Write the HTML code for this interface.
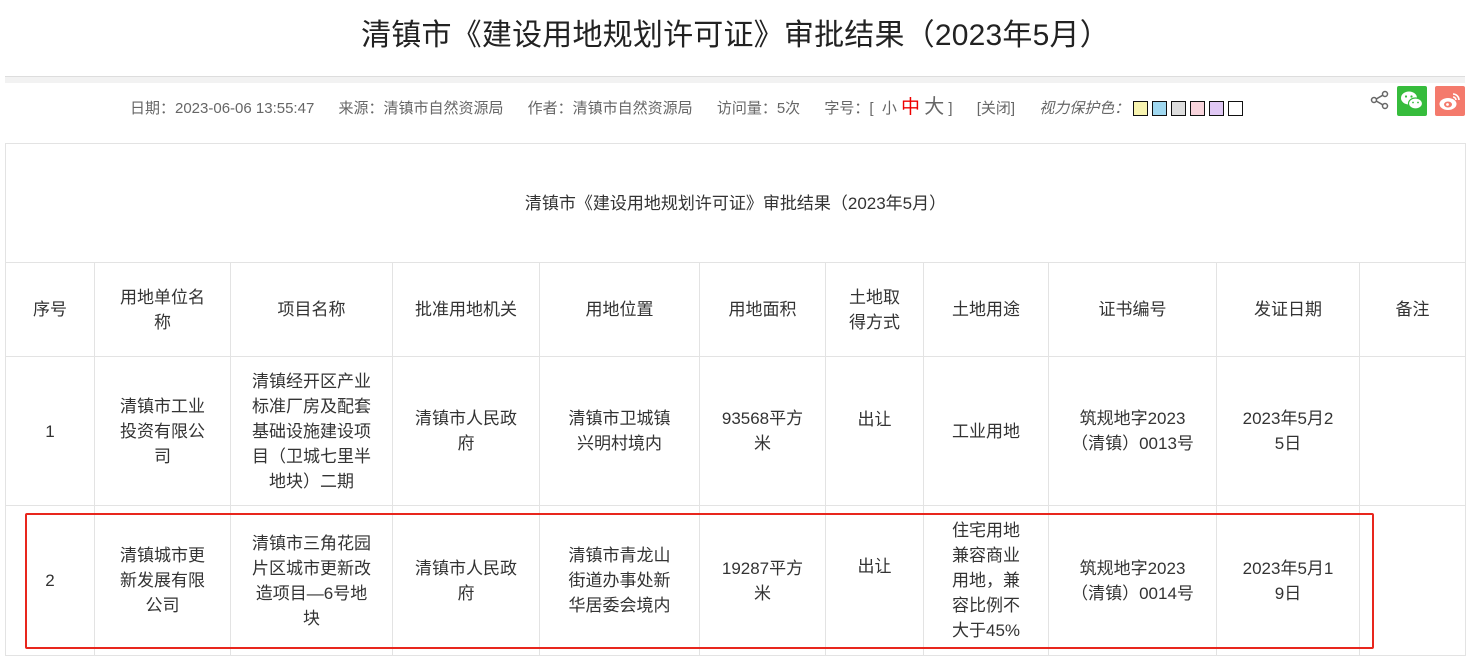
<!DOCTYPE html>
<html><head><meta charset="utf-8"><style>
body{margin:0;width:1479px;height:657px;overflow:hidden;background:#fff;font-family:"Liberation Sans","Noto Sans CJK SC",sans-serif;position:relative}
.t{position:absolute;top:14px;left:-4px;width:1479px;text-align:center;font-size:30px;color:#222;line-height:44px;letter-spacing:0.2px}
.rule{position:absolute;left:5px;top:76px;width:1460px;height:6px;background:#f2f2f2;border-top:1px solid #ddd}
.meta{position:absolute;top:97px;left:130px;font-size:15px;color:#666;white-space:nowrap;line-height:20px}
.meta span{margin-right:20px}
.sw{display:inline-block;width:13px;height:13px;border:1.5px solid #111;vertical-align:-3px;margin-right:4px!important}
table{position:absolute;left:5px;top:143px;border-collapse:collapse;table-layout:fixed;font-size:17px;color:#333}
td{border:1px solid #e3e3e3;text-align:center;vertical-align:middle;padding:0 21px;line-height:25px}
.d{word-break:break-all}
.red{position:absolute;left:25px;top:513px;width:1345px;height:132px;border:2px solid #e8261d;border-radius:2px}
</style></head><body>
<div class="t">清镇市《建设用地规划许可证》审批结果（2023年5月）</div>
<div class="rule"></div>
<div class="meta"><span>日期：2023-06-06 13:55:47</span> <span>来源：清镇市自然资源局</span> <span>作者：清镇市自然资源局</span> <span>访问量：5次</span> <span>字号：[ &nbsp;小 <b style="color:#e00;font-size:19px;font-weight:normal">中</b> <span style="font-size:20px;margin:0">大</span> ]</span> <span>[关闭]</span> <i>视力保护色：</i> <span class="sw" style="background:#f8f4b0"></span><span class="sw" style="background:#a0d8f0"></span><span class="sw" style="background:#ddd"></span><span class="sw" style="background:#f8d4dc"></span><span class="sw" style="background:#e0c8f4"></span><span class="sw" style="background:#fff"></span></div>
<svg style="position:absolute;left:1370px;top:90px" width="20" height="20" viewBox="0 0 20 20"><g fill="none" stroke="#666" stroke-width="1.5"><circle cx="15" cy="4" r="2.5"/><circle cx="4" cy="10" r="2.5"/><circle cx="15" cy="16" r="2.5"/><path d="M6.2 9 L12.8 5.2 M6.2 11 L12.8 14.8"/></g></svg>
<div style="position:absolute;left:1397px;top:86px;width:30px;height:30px;background:#36bc3c;border-radius:2px"><svg width="30" height="30" viewBox="0 0 30 30"><ellipse cx="12" cy="12" rx="8" ry="6.5" fill="#fff"/><ellipse cx="18.5" cy="17.5" rx="7" ry="5.5" fill="#fff" stroke="#36bc3c" stroke-width="1.2"/><circle cx="9" cy="10.5" r="1.1" fill="#36bc3c"/><circle cx="14.5" cy="10.5" r="1.1" fill="#36bc3c"/><circle cx="16" cy="16.5" r="0.9" fill="#36bc3c"/><circle cx="21" cy="16.5" r="0.9" fill="#36bc3c"/></svg></div>
<div style="position:absolute;left:1435px;top:86px;width:30px;height:30px;background:#f47a6c;border-radius:2px"><svg width="30" height="30" viewBox="0 0 30 30"><ellipse cx="13" cy="18" rx="8.5" ry="6" fill="#fff"/><ellipse cx="13" cy="18.5" rx="4" ry="3" fill="#f47a6c"/><circle cx="12.5" cy="18.5" r="1.4" fill="#fff"/><path d="M18 8 a6 6 0 0 1 6 6 M18 11 a3 3 0 0 1 3 3" fill="none" stroke="#fff" stroke-width="1.6"/></svg></div>
<table>
<colgroup><col style="width:89px"><col style="width:136px"><col style="width:162px"><col style="width:147px"><col style="width:160px"><col style="width:126px"><col style="width:98px"><col style="width:125px"><col style="width:168px"><col style="width:143px"><col style="width:106px"></colgroup>
<tr style="height:119px"><td colspan="11">清镇市《建设用地规划许可证》审批结果（2023年5月）</td></tr>
<tr style="height:94px"><td>序号</td><td>用地单位名称</td><td style="padding:0 20px">项目名称</td><td>批准用地机关</td><td>用地位置</td><td>用地面积</td><td>土地取得方式</td><td>土地用途</td><td>证书编号</td><td>发证日期</td><td>备注</td></tr>
<tr style="height:149px"><td>1</td><td>清镇市工业投资有限公司</td><td style="padding:0 20px">清镇经开区产业标准厂房及配套基础设施建设项目（卫城七里半地块）二期</td><td>清镇市人民政府</td><td>清镇市卫城镇兴明村境内</td><td>93568平方米</td><td style="vertical-align:top;padding-top:50px">出让</td><td>工业用地</td><td>筑规地字2023（清镇）0013号</td><td class="d">2023年5月25日</td><td></td></tr>
<tr style="height:150px"><td>2</td><td>清镇城市更新发展有限公司</td><td style="padding:0 20px">清镇市三角花园片区城市更新改造项目—6号地块</td><td>清镇市人民政府</td><td>清镇市青龙山街道办事处新华居委会境内</td><td>19287平方米</td><td style="vertical-align:top;padding-top:48px">出让</td><td>住宅用地兼容商业用地，兼容比例不大于45%</td><td>筑规地字2023（清镇）0014号</td><td class="d">2023年5月19日</td><td></td></tr>
</table>
<div class="red"></div>
</body></html>
